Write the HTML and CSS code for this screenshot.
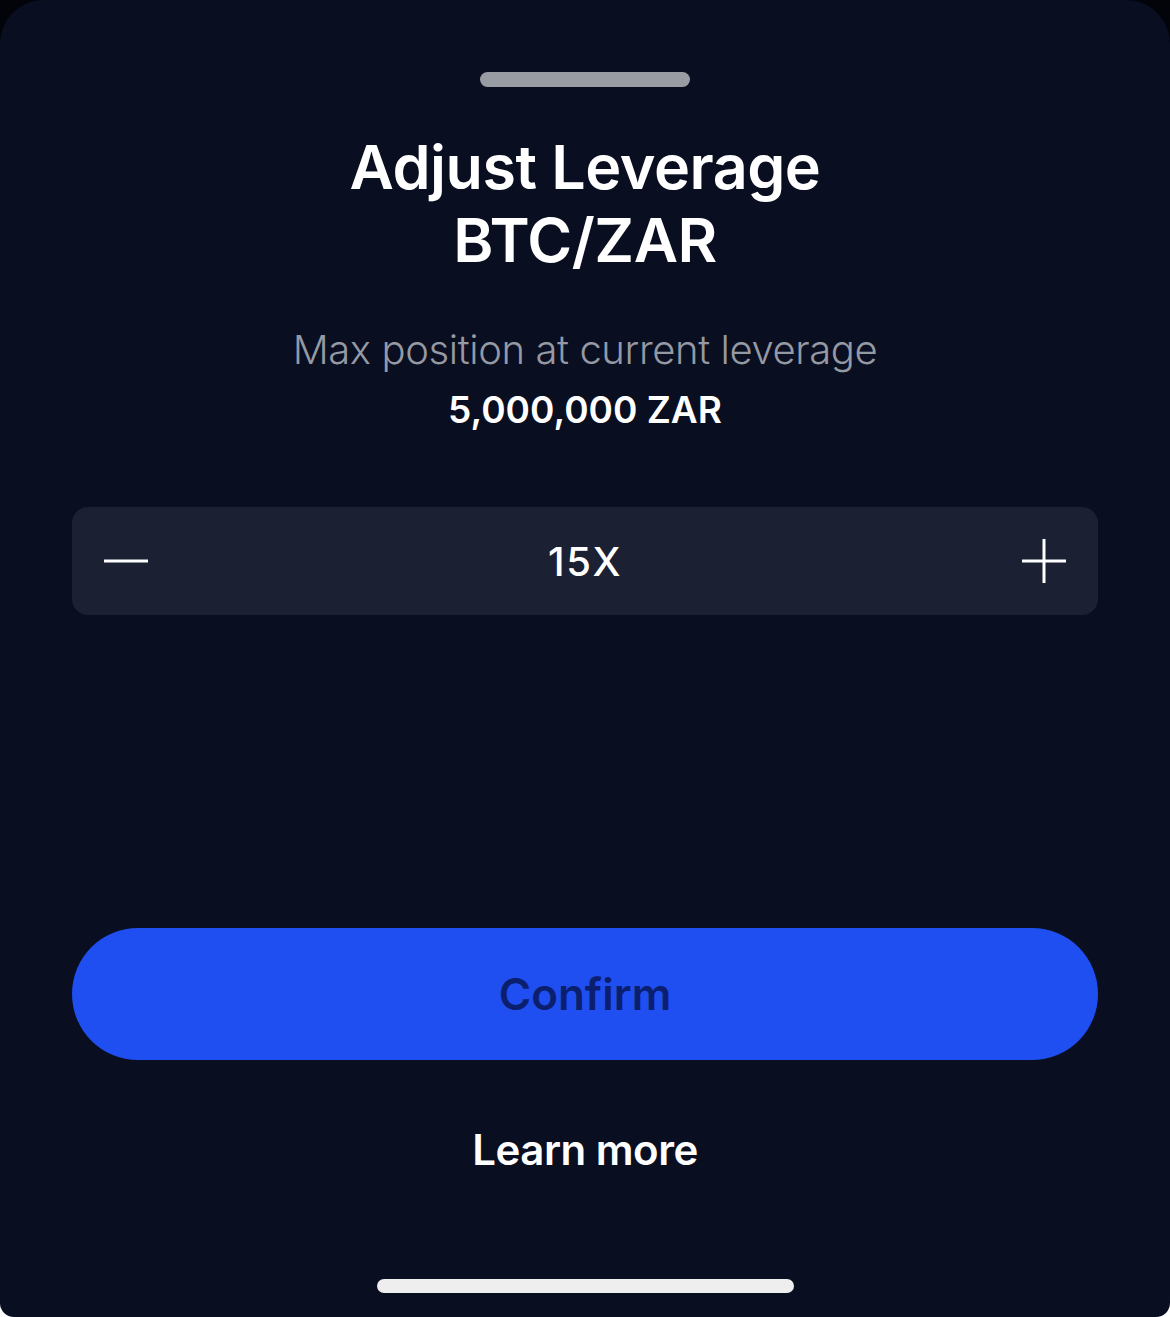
FILE: index.html
```html
<!DOCTYPE html>
<html lang="en">
<head>
<meta charset="utf-8">
<title>Adjust Leverage</title>
<link rel="stylesheet" href="styles.css">
</head>
<body>
<div class="sheet">
  <div class="grabber"></div>
  <h1 class="title">Adjust Leverage<br>BTC/ZAR</h1>
  <p class="subtitle">Max position at current leverage</p>
  <p class="amount">5,000,000 ZAR</p>
  <div class="stepper">
    <button class="step-btn" aria-label="Decrease">
      <svg width="46" height="46" viewBox="0 0 46 46"><path d="M1 23H45" stroke="#fff" stroke-width="3"/></svg>
    </button>
    <span class="value">15X</span>
    <button class="step-btn" aria-label="Increase">
      <svg width="46" height="46" viewBox="0 0 46 46"><path d="M1 23H45M23 1V45" stroke="#fff" stroke-width="3"/></svg>
    </button>
  </div>
  <div class="spacer"></div>
  <button class="confirm">Confirm</button>
  <a class="learn" href="#">Learn more</a>
  <div class="home-indicator"></div>
</div>
</body>
</html>
```
FILE: styles.css
```css
html, body {
  margin: 0;
  padding: 0;
}
body {
  width: 1170px;
  height: 1317px;
  background: linear-gradient(#02040a 0, #02040a 50%, #ffffff 50%, #ffffff 100%);
  font-family: Inter, "Noto Sans", sans-serif;
  overflow: hidden;
}
.sheet {
  box-sizing: border-box;
  height: 1317px;
  background: #090e21;
  border-radius: 44px 44px 14px 14px;
  display: flex;
  flex-direction: column;
  align-items: center;
  padding: 72px 72px 0;
}
.grabber {
  width: 210px;
  height: 15px;
  border-radius: 8px;
  background: #9a9ca3;
}
.title {
  margin: 44px 0 0;
  color: #ffffff;
  font-size: 61px;
  font-weight: 600;
  line-height: 73px;
  text-align: center;
  letter-spacing: -0.5px;
}
.subtitle {
  margin: 49px 0 0;
  color: #9599a3;
  font-size: 40px;
  font-weight: 300;
  line-height: 48px;
  letter-spacing: -0.4px;
}
.amount {
  margin: 12px 0 0;
  color: #ffffff;
  font-size: 37px;
  font-weight: 600;
  line-height: 48px;
}
.stepper {
  margin-top: 73px;
  width: 100%;
  height: 108px;
  box-sizing: border-box;
  background: #1b2033;
  border-radius: 16px;
  display: flex;
  align-items: center;
  justify-content: space-between;
  padding: 0 31px;
}
.step-btn {
  background: none;
  border: 0;
  padding: 0;
  width: 46px;
  height: 46px;
  display: flex;
}
.value {
  color: #ffffff;
  font-size: 40px;
  font-weight: 500;
  letter-spacing: 1.5px;
}
.spacer {
  height: 313px;
}
.confirm {
  width: 100%;
  height: 132px;
  border: 0;
  border-radius: 66px;
  background: #1f4ff0;
  color: #0c1f6e;
  font-family: Inter, "Noto Sans", sans-serif;
  font-size: 44px;
  font-weight: 600;
}
.learn {
  margin-top: 63px;
  color: #ffffff;
  font-size: 42px;
  font-weight: 600;
  line-height: 54px;
  text-decoration: none;
  letter-spacing: -0.5px;
}
.home-indicator {
  margin-top: 102px;
  width: 417px;
  height: 14px;
  border-radius: 7px;
  background: #eeeeee;
}
```
